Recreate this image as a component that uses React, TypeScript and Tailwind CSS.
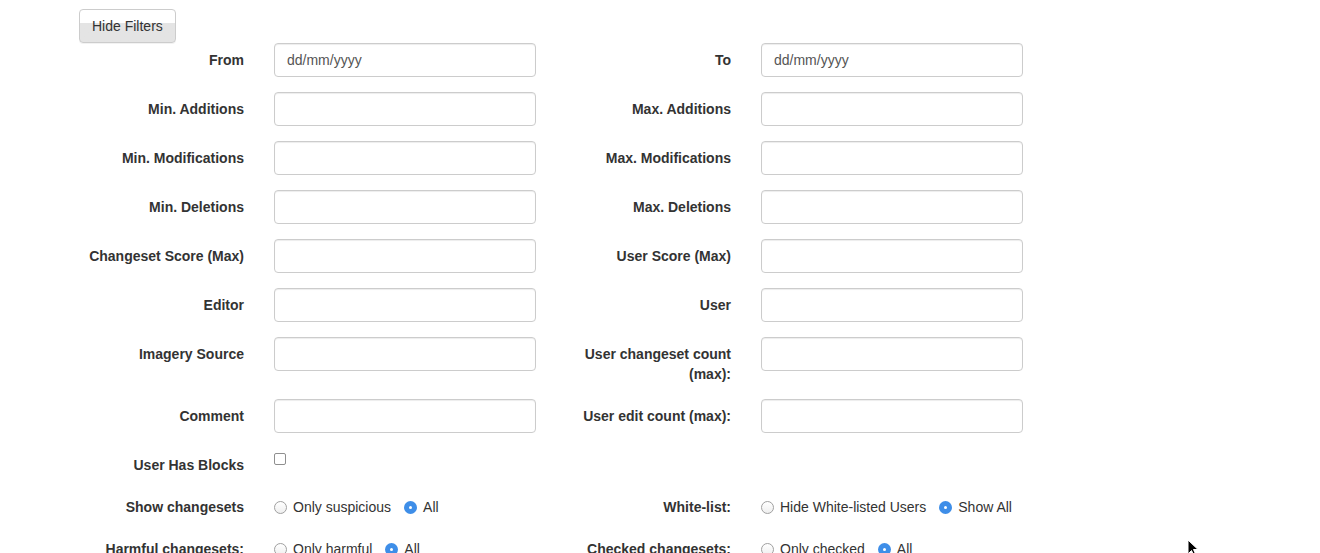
import React from 'react'

const font = { fontFamily: '"Liberation Sans", Arial, sans-serif' }

type Pair = { left: string; right: string; ph?: string }

const rows: Pair[] = [
  { left: 'From', right: 'To', ph: 'dd/mm/yyyy' },
  { left: 'Min. Additions', right: 'Max. Additions' },
  { left: 'Min. Modifications', right: 'Max. Modifications' },
  { left: 'Min. Deletions', right: 'Max. Deletions' },
  { left: 'Changeset Score (Max)', right: 'User Score (Max)' },
  { left: 'Editor', right: 'User' },
  { left: 'Imagery Source', right: 'User changeset count (max):' },
  { left: 'Comment', right: 'User edit count (max):' },
]

function Label({ children }: { children: React.ReactNode }) {
  return (
    <label className="pt-[7px] pr-[15px] pl-[15px] text-right text-[14px] leading-[20px] font-bold text-[#333]">
      {children}
    </label>
  )
}

function Input({ ph }: { ph?: string }) {
  return (
    <div className="px-[15px]">
      <div className="flex h-[34px] items-center rounded-[4px] border border-[#ccc] bg-white px-3 text-[14px] text-[#555] shadow-[inset_0_1px_1px_rgba(0,0,0,0.075)]">
        {ph}
      </div>
    </div>
  )
}

function Radio({ checked, label }: { checked?: boolean; label: string }) {
  return (
    <span className="mr-[13px] inline-flex shrink-0 items-center whitespace-nowrap">
      {checked ? (
        <span className="flex h-[13px] w-[13px] items-center justify-center rounded-full bg-[#3e8ee8]">
          <span className="h-[3px] w-[3px] rounded-full bg-white" />
        </span>
      ) : (
        <span className="h-[13px] w-[13px] rounded-full border border-[#a0a0a0] bg-gradient-to-b from-white to-[#efefef]" />
      )}
      <span className="ml-[6px] text-[14px] leading-[20px] text-[#333]">{label}</span>
    </span>
  )
}

function Radios({ items }: { items: [string, boolean][] }) {
  return (
    <div className="flex h-[27px] items-center px-[15px] pt-[7px] whitespace-nowrap">
      {items.map(([l, c]) => (
        <Radio key={l} label={l} checked={c} />
      ))}
    </div>
  )
}

const grid = 'grid grid-cols-[195px_292px_195px_292px] mb-[15px]'

export default function App() {
  return (
    <div className="relative min-h-[553px] bg-white pl-[64px] pt-[9px]" style={font}>
      <div className="px-[15px]">
        <button className="h-[34px] rounded-[4px] border border-[#ccc] bg-gradient-to-b from-white from-40% to-[#e4e4e4] to-40% px-3 text-[14px] text-[#333] shadow-[0_1px_0_rgba(0,0,0,0.05)]">
          Hide Filters
        </button>
      </div>

      <form>
        {rows.map((r) => (
          <div key={r.left} className={grid}>
            <Label>{r.left}</Label>
            <Input ph={r.ph} />
            <Label>{r.right}</Label>
            <Input ph={r.ph} />
          </div>
        ))}

        <div className={grid}>
          <Label>User Has Blocks</Label>
          <div className="px-[15px] pt-[5px]">
            <span className="block h-[12px] w-[12px] rounded-[2px] border border-[#8f8f8f] bg-white" />
          </div>
          <div />
          <div />
        </div>

        <div className={grid}>
          <Label>Show changesets</Label>
          <Radios items={[['Only suspicious', false], ['All', true]]} />
          <Label>White-list:</Label>
          <Radios items={[['Hide White-listed Users', false], ['Show All', true]]} />
        </div>

        <div className={grid}>
          <Label>Harmful changesets:</Label>
          <Radios items={[['Only harmful', false], ['All', true]]} />
          <Label>Checked changesets:</Label>
          <Radios items={[['Only checked', false], ['All', true]]} />
        </div>
      </form>

      <svg className="absolute left-[1187px] top-[539px]" width="12" height="18" viewBox="0 0 12 18">
        <path d="M1 1 L1 15 L4.5 11.5 L7 17 L9 16 L6.5 10.5 L11 10.5 Z" fill="#000" stroke="#fff" strokeWidth="1" />
      </svg>
    </div>
  )
}
